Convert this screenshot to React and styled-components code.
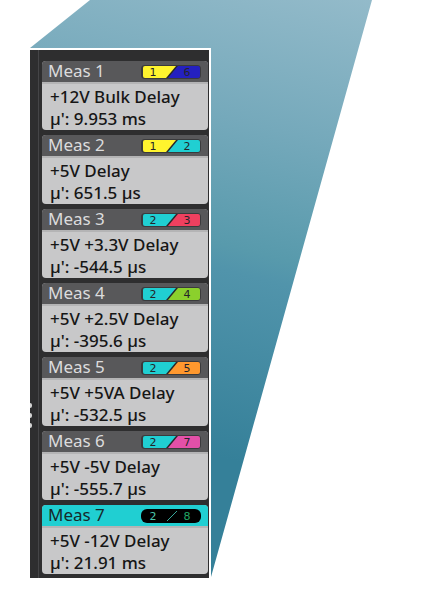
import styled, { createGlobalStyle } from "styled-components";

const yellow = "#fff42e";
const cyan = "#20cfd2";

const measurements = [
  { id: 1, name: "+12V Bulk Delay", value: "9.953 ms", from: 1, to: 6, fromColor: yellow, toColor: "#2420c0" },
  { id: 2, name: "+5V Delay", value: "651.5 µs", from: 1, to: 2, fromColor: yellow, toColor: cyan },
  { id: 3, name: "+5V +3.3V Delay", value: "-544.5 µs", from: 2, to: 3, fromColor: cyan, toColor: "#ef405f" },
  { id: 4, name: "+5V +2.5V Delay", value: "-395.6 µs", from: 2, to: 4, fromColor: cyan, toColor: "#8bd02c" },
  { id: 5, name: "+5V +5VA Delay", value: "-532.5 µs", from: 2, to: 5, fromColor: cyan, toColor: "#ff982e" },
  { id: 6, name: "+5V -5V Delay", value: "-555.7 µs", from: 2, to: 7, fromColor: cyan, toColor: "#e350a8" },
  { id: 7, name: "+5V -12V Delay", value: "21.91 ms", from: 2, to: 8, selected: true },
];

function Beam() {
  return (
    <BeamSvg width="424" height="591" viewBox="0 0 424 591" aria-hidden="true">
      <defs>
        <linearGradient id="beam" gradientUnits="userSpaceOnUse" x1="350" y1="-20" x2="230" y2="460">
          <stop offset="0" stopColor="#96bccb" />
          <stop offset="0.33" stopColor="#75a9bb" />
          <stop offset="0.58" stopColor="#589aac" />
          <stop offset="0.63" stopColor="#5194ab" />
          <stop offset="1" stopColor="#358099" />
        </linearGradient>
      </defs>
      <path d="M90 0H372L211 577V48H30Z" fill="url(#beam)" />
    </BeamSvg>
  );
}

function SourceBadge({ from, to, fromColor, toColor, selected }) {
  return (
    <Badge viewBox="0 0 60 14" role="img" aria-label={`Source ${from} to ${to}`}>
      <rect width="60" height="14" rx={selected ? 6 : 4} fill={selected ? "#000" : "#3a3a3c"} />
      {!selected && (
        <>
          <path d="M25 13L35 1H37L27 13Z" fill="#28282a" />
          <path d="M4 1H35L25 13H4Q2 13 2 11V3Q2 1 4 1Z" fill={fromColor} />
          <path d="M37 1H57Q59 1 59 3V11Q59 13 57 13H27Z" fill={toColor} />
        </>
      )}
      {selected && <path d="M26 12L36 2" stroke="#38a99c" />}
      <Digit x="12" y="11" fill={selected ? "#4cc4aa" : "#24242a"}>{from}</Digit>
      <Digit x="46" y="11" fill={selected ? "#20a866" : "#24242a"}>{to}</Digit>
    </Badge>
  );
}

function MeasCard({ meas }) {
  return (
    <Card>
      <CardHeader $selected={meas.selected}>
        <Title>Meas {meas.id}</Title>
        <SourceBadge {...meas} />
      </CardHeader>
      <CardBody>
        <Line>{meas.name}</Line>
        <Line>µ': {meas.value}</Line>
      </CardBody>
    </Card>
  );
}

function App() {
  return (
    <Page>
      <GlobalStyle />
      <Beam />
      <Panel>
        <Rail>
          <Handle>
            <Dot />
            <Dot />
            <Dot />
          </Handle>
        </Rail>
        <Results>
          {measurements.map((meas) => (
            <MeasCard key={meas.id} meas={meas} />
          ))}
        </Results>
      </Panel>
    </Page>
  );
}

const GlobalStyle = createGlobalStyle`
  * {
    box-sizing: border-box;
  }
  body {
    margin: 0;
    background: #fff;
    font-family: "Noto Sans", "Open Sans", sans-serif;
  }
`;
const Page = styled.main`
  position: relative;
  overflow: hidden;
  padding: 48px 30px 13px;
`;
const BeamSvg = styled.svg`
  position: absolute;
  top: 0;
  left: 0;
`;
const Panel = styled.section`
  position: relative;
  display: flex;
  width: 100%;
  max-width: 181px;
  border-top: 2px solid #fff;
  border-right: 2px solid #fff;
  background: #2e2e2f;
`;
const Rail = styled.div`
  display: flex;
  flex-direction: column;
  flex: 0 0 9px;
  border-right: 1px solid #454547;
`;
const Handle = styled.div`
  display: flex;
  flex-direction: column;
  gap: 5px;
  margin-top: 353px;
`;
const Dot = styled.span`
  width: 2px;
  height: 5px;
  border-radius: 0 2px 2px 0;
  background: #d4d4d4;
`;
const Results = styled.ul`
  display: flex;
  flex-direction: column;
  flex: 1;
  gap: 5px;
  margin: 0;
  padding: 11px 1px 4px 3px;
  list-style: none;
`;
const Card = styled.li`
  border-radius: 4px;
  background: #c8c8c9;
`;
const CardHeader = styled.div`
  display: flex;
  align-items: center;
  justify-content: space-between;
  height: 21px;
  padding: 0 7px 0 6px;
  border-radius: 4px 4px 0 0;
  color: ${(props) => (props.$selected ? "#16292b" : "#dcdcdd")};
  background: ${(props) => (props.$selected ? cyan : "#58585a")};
`;
const Title = styled.h2`
  align-self: flex-start;
  margin: 0;
  font-size: 17px;
  font-weight: 400;
  line-height: 20px;
`;
const Badge = styled.svg`
  width: 60px;
  height: 14px;
`;
const Digit = styled.text`
  font-family: "DejaVu Sans", sans-serif;
  font-size: 11px;
  text-anchor: middle;
`;
const CardBody = styled.div`
  height: 48px;
  padding: 2px 8px 0;
  border-top: 2px solid #b4b4b5;
`;
const Line = styled.p`
  margin: 0;
  color: #161616;
  font-size: 17px;
  font-weight: 500;
  line-height: 22px;
  white-space: nowrap;
`;

export default App;
